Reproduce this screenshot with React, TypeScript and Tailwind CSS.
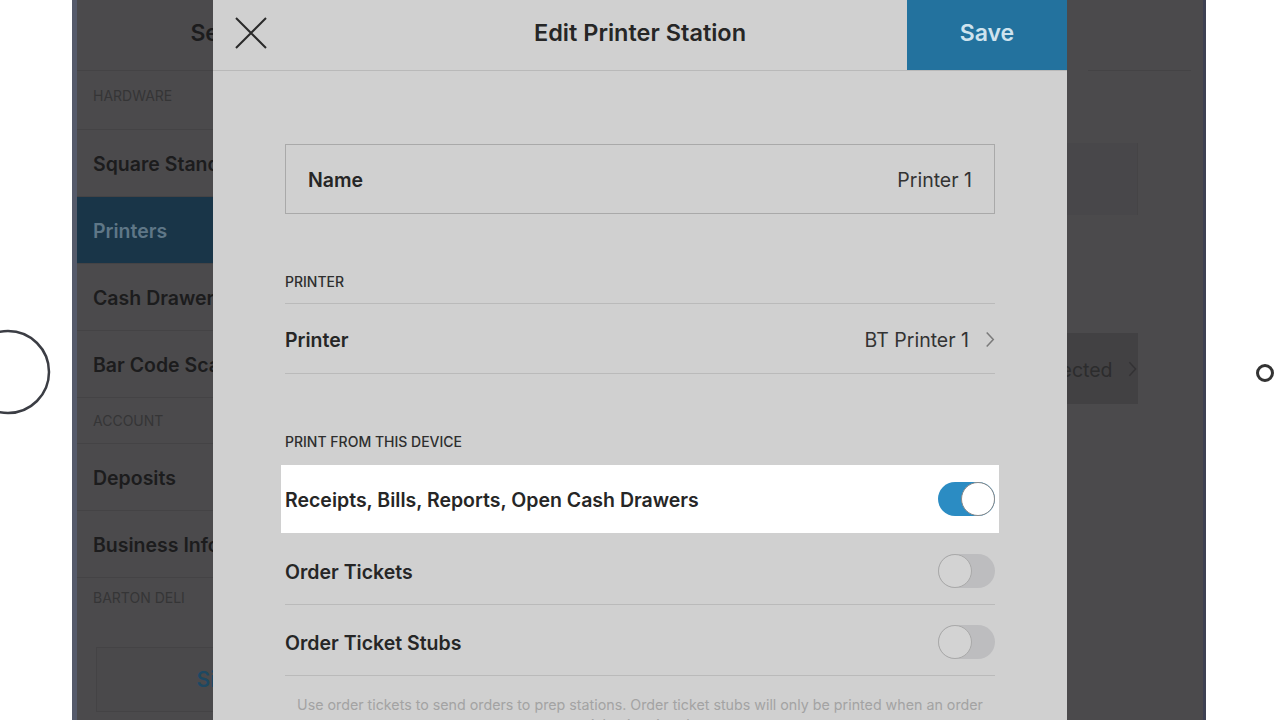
import React from 'react';

const font = { fontFamily: 'Inter, "Noto Sans", sans-serif' };

function Toggle({ on }: { on: boolean }) {
  return on ? (
    <div className="w-[57px] h-[34px] rounded-full bg-[#2b8cc3] flex items-center justify-end">
      <div className="w-[34px] h-[34px] rounded-full bg-white border border-[#8a8a8a]" />
    </div>
  ) : (
    <div className="w-[57px] h-[34px] rounded-full bg-[#bdbdbf] flex items-center justify-start">
      <div className="w-[34px] h-[34px] rounded-full bg-[#d3d3d3] border border-[#a9a9a9]" />
    </div>
  );
}

function Chevron({ className }: { className: string }) {
  return (
    <svg className={className} viewBox="0 0 10 18" fill="none" stroke="currentColor" strokeWidth="1.6">
      <path d="M1.5 1.5 L8.5 9 L1.5 16.5" />
    </svg>
  );
}

function SideRow({ label, active }: { label: string; active?: boolean }) {
  return (
    <div
      className={`h-[67px] flex items-center pl-[16px] pt-[4px] border-b border-[#444345] text-[19.5px] font-semibold whitespace-nowrap ${
        active ? 'bg-[#193548] text-[#5f7787]' : 'text-[#1c1c1d]'
      }`}
    >
      {label}
    </div>
  );
}

export default function App() {
  return (
    <div className="w-[1280px] h-[720px] bg-white flex overflow-hidden" style={font}>
      {/* home button */}
      <div className="w-[72px] shrink-0">
        <svg width="72" height="720">
          <circle cx="8" cy="372" r="41" fill="none" stroke="#3b3d44" strokeWidth="2.5" />
        </svg>
      </div>
      <div className="w-[5px] shrink-0 bg-[#555a6a]" />

      {/* screen */}
      <div className="w-[1126px] shrink-0 flex bg-[#4b4a4c] overflow-hidden">
        {/* settings sidebar (dimmed) */}
        <aside className="w-[136px] shrink-0 overflow-hidden">
          <div className="w-[312px]">
            <div className="h-[71px] flex items-center justify-center pl-[6px] pb-[4px] border-b border-[#444345] text-[23px] font-semibold text-[#1c1c1d]">
              Settings
            </div>
            <div className="h-[59px] pt-[14px] pl-[16px] border-b border-[#444345] text-[14px] text-[#353536]">HARDWARE</div>
            <SideRow label="Square Stand" />
            <SideRow label="Printers" active />
            <SideRow label="Cash Drawers" />
            <SideRow label="Bar Code Scanners" />
            <div className="h-[46px] flex items-center pl-[16px] border-b border-[#444345] text-[14px] text-[#353536]">ACCOUNT</div>
            <SideRow label="Deposits" />
            <SideRow label="Business Info" />
            <div className="h-[45px] flex items-center pb-[6px] pl-[16px] text-[14px] text-[#353536] whitespace-nowrap">
              BARTON DELI
            </div>
            <div className="mt-[24px] mx-[19px] h-[65px] border border-[#444345] bg-[#4a494b] flex items-center justify-center text-[21px] font-semibold text-[#1d4862]">
              <span className="pl-[14px]">Sign Out</span>
            </div>
          </div>
        </aside>

        {/* modal */}
        <section className="w-[854px] shrink-0 bg-[#d0d0d0] flex flex-col">
          <header className="h-[71px] shrink-0 flex items-center border-b border-[#b9b9b9]">
            <div className="w-[160px] pl-[22px] pb-[5px]">
              <svg width="32" height="32" viewBox="0 0 32 32" stroke="#2a2a2a" strokeWidth="2">
                <path d="M1 1 L31 31 M31 1 L1 31" />
              </svg>
            </div>
            <div className="flex-1 pb-[4px] text-center text-[23.5px] font-semibold text-[#262626]">Edit Printer Station</div>
            <div className="w-[160px] h-full pb-[4px] bg-[#23729e] flex items-center justify-center text-[23px] font-semibold text-[#cfe3ee]">
              Save
            </div>
          </header>

          <div className="px-[72px] pt-[73px] flex flex-col">
            <div className="h-[70px] border border-[#a9a9a9] flex items-center justify-between pt-[4px] px-[22px]">
              <span className="text-[19.5px] font-semibold text-[#262626]">Name</span>
              <span className="text-[19.5px] text-[#333]">Printer 1</span>
            </div>

            <div className="h-[90px] flex items-end pb-[11px] border-b border-[#bababa] text-[14px] font-medium text-[#2e2e2e]">
              PRINTER
            </div>
            <div className="h-[70px] flex items-center justify-between pt-[5px] border-b border-[#bababa]">
              <span className="text-[19.5px] font-semibold text-[#262626]">Printer</span>
              <span className="flex items-center gap-[16px] text-[19.5px] text-[#333]">
                BT Printer 1
                <Chevron className="w-[10px] h-[17px] text-[#7a7a7a] -mt-[4px]" />
              </span>
            </div>

            <div className="h-[91px] flex items-end pb-[13px] text-[14px] font-medium text-[#2e2e2e]">
              PRINT FROM THIS DEVICE
            </div>
            <div className="-mx-[4px] px-[4px] h-[68px] bg-white flex items-center justify-between">
              <span className="pt-[4px] text-[19.5px] font-semibold text-[#262626]">Receipts, Bills, Reports, Open Cash Drawers</span>
              <Toggle on />
            </div>
            <div className="h-[72px] flex items-center justify-between pt-[4px] border-b border-[#bababa]">
              <span className="pt-[4px] text-[19.5px] font-semibold text-[#262626]">Order Tickets</span>
              <Toggle on={false} />
            </div>
            <div className="h-[71px] flex items-center justify-between pt-[4px] border-b border-[#bababa]">
              <span className="pt-[4px] text-[19.5px] font-semibold text-[#262626]">Order Ticket Stubs</span>
              <Toggle on={false} />
            </div>
            <p className="pt-[19px] px-[10px] text-center text-[14.25px] leading-[20px] text-[#a3a3a3]">
              Use order tickets to send orders to prep stations. Order ticket stubs will only be printed when an order
              ticket is printed.
            </p>
          </div>
        </section>

        {/* right pane (dimmed) */}
        <div className="flex-1 flex flex-col overflow-hidden">
          <div className="h-[71px] shrink-0 ml-[21px] mr-[12px] border-b border-[#444345]" />
          <div className="mt-[72px] w-[71px] h-[72px] bg-[#48474a] border-r border-[#454446]" />
          <div className="mt-[118px] w-[71px] h-[71px] bg-[#424143] flex items-center justify-between pt-[4px] pr-[1px] overflow-hidden">
            <span className="-ml-[18px] text-[19.5px] text-[#2c2c2d] whitespace-nowrap">nected</span>
            <Chevron className="w-[9px] h-[16px] text-[#333234] -mt-[4px]" />
          </div>
        </div>
      </div>

      <div className="w-[3px] shrink-0 bg-[#3e4152]" />
      {/* camera */}
      <div className="flex-1">
        <svg width="74" height="720">
          <circle cx="59" cy="373" r="7.5" fill="none" stroke="#333" strokeWidth="3" />
        </svg>
      </div>
    </div>
  );
}
